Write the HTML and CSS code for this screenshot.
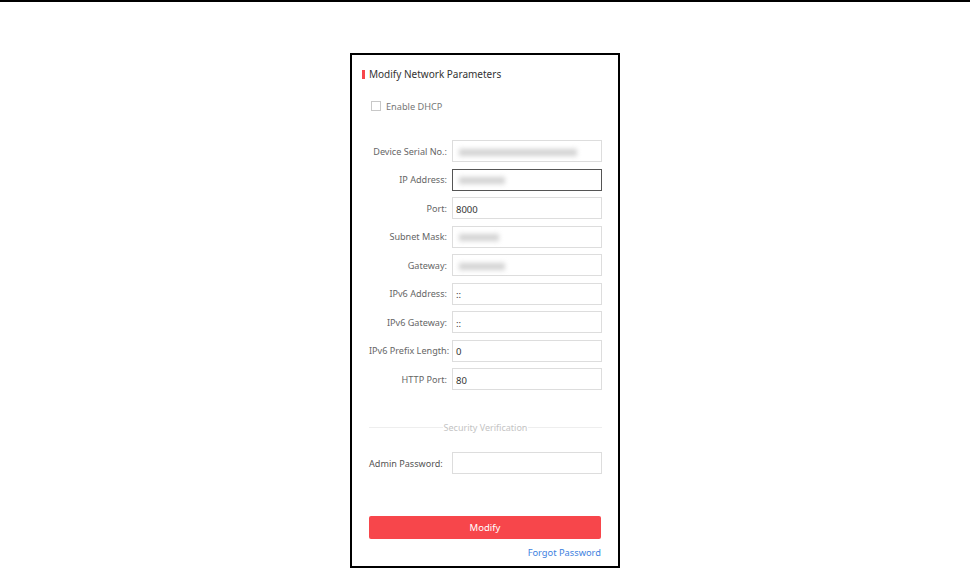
FILE: index.html
```html
<!DOCTYPE html>
<html>
<head>
<meta charset="utf-8">
<link rel="stylesheet" href="styles.css">
</head>
<body>
<div class="topbar"></div>
<div class="panel">
  <div class="title"><span class="mark"></span>Modify Network Parameters</div>
  <label class="dhcp"><span class="box"></span>Enable DHCP</label>
  <div class="form">
    <div class="row"><span class="lbl">Device Serial No.:</span><div class="inp"><span class="blur w1"></span></div></div>
    <div class="row"><span class="lbl">IP Address:</span><div class="inp focus"><span class="blur w2"></span></div></div>
    <div class="row"><span class="lbl">Port:</span><div class="inp">8000</div></div>
    <div class="row"><span class="lbl">Subnet Mask:</span><div class="inp"><span class="blur w3"></span></div></div>
    <div class="row"><span class="lbl">Gateway:</span><div class="inp"><span class="blur w2"></span></div></div>
    <div class="row"><span class="lbl">IPv6 Address:</span><div class="inp">::</div></div>
    <div class="row"><span class="lbl">IPv6 Gateway:</span><div class="inp">::</div></div>
    <div class="row"><span class="lbl">IPv6 Prefix Length:</span><div class="inp">0</div></div>
    <div class="row"><span class="lbl">HTTP Port:</span><div class="inp">80</div></div>
  </div>
  <div class="divider"><span>Security Verification</span></div>
  <div class="row admin"><span class="lbl">Admin Password:</span><div class="inp"></div></div>
  <div class="btn">Modify</div>
  <div class="forgot"><a>Forgot Password</a></div>
</div>
</body>
</html>
```
FILE: styles.css
```css
html, body {
  margin: 0;
  padding: 0;
  background: #fff;
  font-family: "Noto Sans", "Open Sans", sans-serif;
}
.topbar {
  height: 2px;
  background: #000;
}
.panel {
  box-sizing: border-box;
  width: 270px;
  height: 515px;
  margin: 51px auto 0;
  border: 2px solid #000;
  padding: 12px 16px 0 17px;
  display: flex;
  flex-direction: column;
}
.title {
  display: flex;
  align-items: center;
  font-size: 10px;
  color: #333;
  height: 14px;
  margin-left: -7px;
}
.mark {
  width: 3px;
  height: 9px;
  background: #f7464b;
  margin-right: 4px;
}
.dhcp {
  display: flex;
  align-items: center;
  margin-top: 19px;
  margin-left: 2px;
  font-size: 9.2px;
  color: #777;
  height: 12px;
}
.box {
  width: 8px;
  height: 8px;
  border: 1px solid #c8c8c8;
  margin-right: 5px;
}
.form {
  margin-top: 28px;
  display: flex;
  flex-direction: column;
  gap: 6.5px;
}
.row {
  display: flex;
  align-items: center;
  gap: 5px;
}
.lbl {
  width: 78px;
  flex: none;
  text-align: right;
  font-size: 9.1px;
  color: #666;
  white-space: nowrap;
}
.inp {
  box-sizing: border-box;
  width: 151px;
  height: 22px;
  border: 1px solid #ddd;
  display: flex;
  align-items: center;
  padding: 2px 3px 0;
  font-size: 9.5px;
  color: #333;
}
.inp.focus {
  border-color: #555;
}
.blur {
  display: block;
  height: 7px;
  background: #d2d2d2;
  filter: blur(2.5px);
  margin-left: 3px;
}
.w1 { width: 118px; }
.w2 { width: 46px; }
.w3 { width: 40px; }
.divider {
  margin-top: 31px;
  display: flex;
  align-items: center;
  font-size: 9px;
  color: #c4c4c4;
}
.divider::before, .divider::after {
  content: "";
  flex: 1;
  height: 1px;
  background: #eee;
}
.divider span {
  padding: 0 1px;
}
.admin {
  margin-top: 18px;
}
.admin .lbl {
  text-align: left;
  color: #555;
}
.btn {
  margin-top: 42px;
  height: 23px;
  width: 232px;
  background: #f7464b;
  border-radius: 2px;
  color: #fff;
  font-size: 9.5px;
  display: flex;
  align-items: center;
  justify-content: center;
}
.forgot {
  margin-top: 7px;
  width: 232px;
  text-align: right;
  font-size: 9.3px;
}
.forgot a {
  color: #3d7fe0;
}
```
